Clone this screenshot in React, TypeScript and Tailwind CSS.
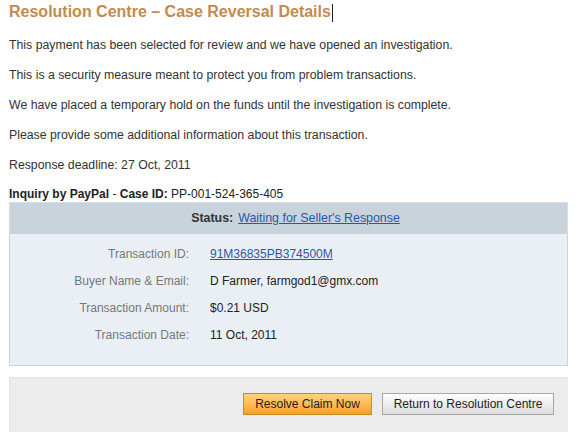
import React from "react";

const rows: { label: string; value: React.ReactNode }[] = [
  {
    label: "Transaction ID:",
    value: (
      <a href="#" className="text-[#2a58a8] underline">
        91M36835PB374500M
      </a>
    ),
  },
  { label: "Buyer Name & Email:", value: "D Farmer, farmgod1@gmx.com" },
  { label: "Transaction Amount:", value: "$0.21 USD" },
  { label: "Transaction Date:", value: "11 Oct, 2011" },
];

export default function App() {
  return (
    <div
      className="w-[576px] h-[432px] overflow-hidden bg-white pl-[9px] pr-[8px] text-[12px] text-[#333]"
      style={{ fontFamily: '"Liberation Sans", Arial, sans-serif' }}
    >
      <div className="h-[30px] flex items-start pt-[2px]">
        <h1 className="text-[16px] font-bold leading-[20px] text-[#c38a4f]">
          Resolution Centre – Case Reversal Details
          <span className="inline-block w-px h-[18px] bg-[#222] align-middle ml-[1px]" />
        </h1>
      </div>
      <div className="text-[12.3px]">
        <p className="h-[30px] leading-[30px]">
          This payment has been selected for review and we have opened an investigation.
        </p>
        <p className="h-[30px] leading-[30px]">
          This is a security measure meant to protect you from problem transactions.
        </p>
        <p className="h-[30px] leading-[30px]">
          We have placed a temporary hold on the funds until the investigation is complete.
        </p>
        <p className="h-[30px] leading-[30px]">
          Please provide some additional information about this transaction.
        </p>
        <p className="h-[30px] leading-[30px]">Response deadline: 27 Oct, 2011</p>
      </div>
      <p className="mt-[6px] h-[16px] leading-[16px] text-[#222]">
        <span className="font-bold">Inquiry by PayPal</span> - <span className="font-bold">Case ID:</span>{" "}
        PP-001-524-365-405
      </p>
      <div className="h-[32px] bg-[#c9d3dc] border-t border-x border-[#d6dde4] flex items-center justify-center gap-[5px] pl-[14px] text-[12.4px]">
        <span className="font-bold text-[#333]">Status:</span>
        <a href="#" className="text-[#2a58a8] underline">
          Waiting for Seller's Response
        </a>
      </div>
      <div className="h-[132px] bg-[#eaeff6] border border-t-0 border-[#c9d3dc] pt-[6px]">
        {rows.map((r) => (
          <div key={r.label} className="h-[27px] flex items-center">
            <div className="w-[179px] text-right text-[#777]">{r.label}</div>
            <div className="pl-[21px] text-[#222]">{r.value}</div>
          </div>
        ))}
      </div>
      <div className="mt-[11px] h-[60px] bg-[#ececec] border-l border-t border-[#e2e2e2] flex justify-end items-start pt-[15px] pr-[14px] gap-[10px]">
        <button className="h-[22px] w-[129px] border border-[#d08a24] bg-gradient-to-b from-[#ffd47a] to-[#f8a11c] text-[12px] text-[#222]">
          Resolve Claim Now
        </button>
        <button className="h-[22px] w-[172px] border border-[#a8a8a8] bg-gradient-to-b from-[#ffffff] to-[#dcdcdc] text-[12px] text-[#222]">
          Return to Resolution Centre
        </button>
      </div>
    </div>
  );
}
